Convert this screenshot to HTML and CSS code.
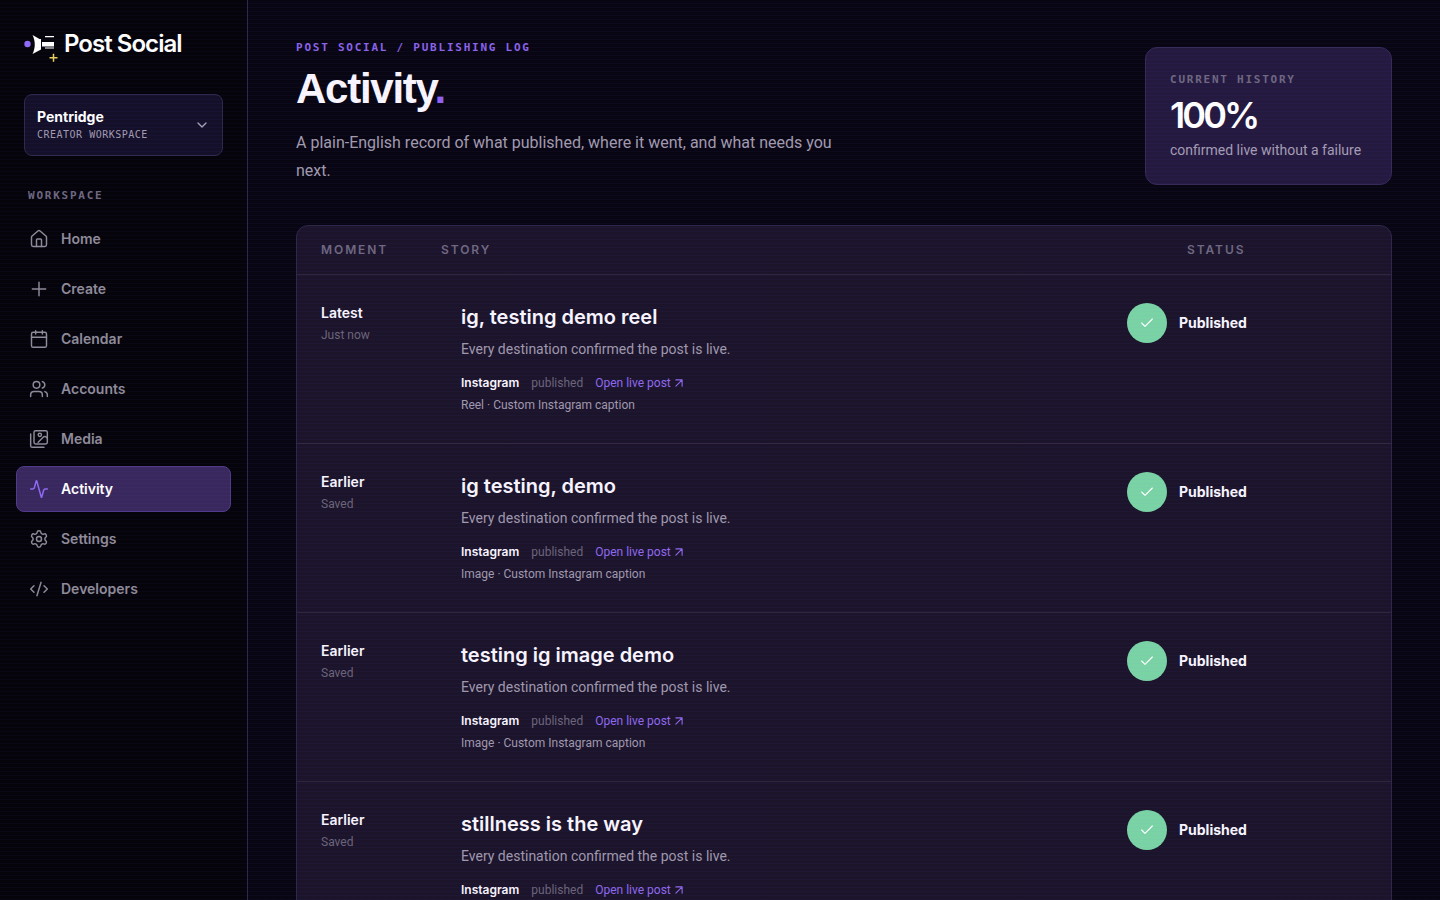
FILE: index.html
```
<!DOCTYPE html>
<html lang="en">
<head>
<meta charset="utf-8">
<title>Activity</title>
<link rel="stylesheet" href="styles.css">
</head>
<body>
<svg class="sprite" aria-hidden="true">
  <symbol id="check" viewBox="0 0 24 24"><path d="M20 6 9 17l-5-5"/></symbol>
  <symbol id="arrow" viewBox="4 4 16 16"><path d="M7 7h10v10M7 17 17 7"/></symbol>
</svg>
<div class="shell">
  <aside class="sidebar">
    <a class="brand" href="#">
      <svg class="brand-mark" viewBox="0 0 36 36" aria-hidden="true">
        <circle cx="3.5" cy="18" r="3.2" fill="#8f6af5"/>
        <path d="M8.500 9 15.500 13h1.500v10.500l-8.500 4.500c3-6 3-13 0-19Z" fill="#fff"/>
        <path d="M18 16H30v4.500H18ZM21 10h9v1.200h-9ZM21 21.500h9v1h-9Z" fill="#fff"/>
        <path d="M29.500 27.700v8M25.500 31.700h8" stroke="#e6cf62" stroke-width="1.500"/>
      </svg>
      <span>Post Social</span>
    </a>
    <button class="workspace" type="button">
      <span class="workspace-text">
        <strong>Pentridge</strong>
        <small>CREATOR WORKSPACE</small>
      </span>
      <svg class="icon chevron" viewBox="0 0 24 24" aria-hidden="true"><path d="m6 9 6 6 6-6"/></svg>
    </button>
    <p class="label nav-label">WORKSPACE</p>
    <nav class="nav">
      <a href="#"><svg class="icon" viewBox="0 0 24 24" aria-hidden="true"><path d="M15 21v-8a1 1 0 0 0-1-1h-4a1 1 0 0 0-1 1v8"/><path d="M3 10a2 2 0 0 1 .709-1.528l7-6a2 2 0 0 1 2.582 0l7 6A2 2 0 0 1 21 10v9a2 2 0 0 1-2 2H5a2 2 0 0 1-2-2z"/></svg>Home</a>
      <a href="#"><svg class="icon" viewBox="0 0 24 24" aria-hidden="true"><path d="M4 12h16M12 4v16"/></svg>Create</a>
      <a href="#"><svg class="icon" viewBox="0 0 24 24" aria-hidden="true"><path d="M8 2v4M16 2v4M3 10h18"/><rect width="18" height="18" x="3" y="4" rx="2"/></svg>Calendar</a>
      <a href="#"><svg class="icon" viewBox="0 0 24 24" aria-hidden="true"><path d="M16 21v-2a4 4 0 0 0-4-4H6a4 4 0 0 0-4 4v2M16 3.128a4 4 0 0 1 0 7.744M22 21v-2a4 4 0 0 0-3-3.870"/><circle cx="9" cy="7" r="4"/></svg>Accounts</a>
      <a href="#"><svg class="icon" viewBox="0 0 24 24" aria-hidden="true"><path d="m22 11-1.296-1.296a2.400 2.400 0 0 0-3.408 0L11 16"/><path d="M18 22H4a2 2 0 0 1-2-2V6"/><circle cx="13" cy="7" r="2"/><rect width="16" height="16" x="6" y="2" rx="2"/></svg>Media</a>
      <a href="#" class="active" aria-current="page"><svg class="icon" viewBox="0 0 24 24" aria-hidden="true"><path d="M22 12h-2.480a2 2 0 0 0-1.930 1.460l-2.350 8.360a.25.25 0 0 1-.48 0L9.240 2.180a.25.25 0 0 0-.48 0l-2.350 8.360A2 2 0 0 1 4.490 12H2"/></svg>Activity</a>
      <a href="#"><svg class="icon" viewBox="0 0 24 24" aria-hidden="true"><path d="M9.671 4.136a2.340 2.340 0 0 1 4.659 0 2.340 2.340 0 0 0 3.319 1.915 2.340 2.340 0 0 1 2.330 4.033 2.340 2.340 0 0 0 0 3.831 2.340 2.340 0 0 1-2.330 4.033 2.340 2.340 0 0 0-3.319 1.915 2.340 2.340 0 0 1-4.659 0 2.340 2.340 0 0 0-3.320-1.915 2.340 2.340 0 0 1-2.330-4.033 2.340 2.340 0 0 0 0-3.831A2.340 2.340 0 0 1 6.350 6.051a2.340 2.340 0 0 0 3.319-1.915"/><circle cx="12" cy="12" r="3"/></svg>Settings</a>
      <a href="#"><svg class="icon" viewBox="0 0 24 24" aria-hidden="true"><path d="m18 16 4-4-4-4M6 8l-4 4 4 4M14.500 4l-5 16"/></svg>Developers</a>
    </nav>
  </aside>
  <main class="main">
    <header class="page-head">
      <div class="intro">
        <p class="label eyebrow">POST SOCIAL / PUBLISHING LOG</p>
        <h1>Activity<span class="dot">.</span></h1>
        <p class="lead">A plain-English record of what published, where it went, and what needs you next.</p>
      </div>
      <section class="score">
        <p class="label">CURRENT HISTORY</p>
        <strong>100%</strong>
        <p class="score-note">confirmed live without a failure</p>
      </section>
    </header>
    <table class="log">
      <thead>
        <tr><th scope="col">MOMENT</th><th scope="col">STORY</th><th scope="col">STATUS</th></tr>
      </thead>
      <tbody>
        <tr>
          <td class="moment"><strong>Latest</strong><span>Just now</span></td>
          <td class="story"><h2>ig, testing demo reel</h2><p class="summary">Every destination confirmed the post is live.</p>
            <div class="target"><strong>Instagram</strong><span>published</span><a href="#">Open live post <svg class="icon arrow" aria-hidden="true"><use href="#arrow"/></svg></a></div>
            <p class="caption">Reel · Custom Instagram caption</p></td>
          <td class="status"><span class="badge"><svg class="icon" aria-hidden="true"><use href="#check"/></svg></span><strong>Published</strong></td>
        </tr>
        <tr>
          <td class="moment"><strong>Earlier</strong><span>Saved</span></td>
          <td class="story"><h2>ig testing, demo</h2><p class="summary">Every destination confirmed the post is live.</p>
            <div class="target"><strong>Instagram</strong><span>published</span><a href="#">Open live post <svg class="icon arrow" aria-hidden="true"><use href="#arrow"/></svg></a></div>
            <p class="caption">Image · Custom Instagram caption</p></td>
          <td class="status"><span class="badge"><svg class="icon" aria-hidden="true"><use href="#check"/></svg></span><strong>Published</strong></td>
        </tr>
        <tr>
          <td class="moment"><strong>Earlier</strong><span>Saved</span></td>
          <td class="story"><h2>testing ig image demo</h2><p class="summary">Every destination confirmed the post is live.</p>
            <div class="target"><strong>Instagram</strong><span>published</span><a href="#">Open live post <svg class="icon arrow" aria-hidden="true"><use href="#arrow"/></svg></a></div>
            <p class="caption">Image · Custom Instagram caption</p></td>
          <td class="status"><span class="badge"><svg class="icon" aria-hidden="true"><use href="#check"/></svg></span><strong>Published</strong></td>
        </tr>
        <tr>
          <td class="moment"><strong>Earlier</strong><span>Saved</span></td>
          <td class="story"><h2>stillness is the way</h2><p class="summary">Every destination confirmed the post is live.</p>
            <div class="target"><strong>Instagram</strong><span>published</span><a href="#">Open live post <svg class="icon arrow" aria-hidden="true"><use href="#arrow"/></svg></a></div></td>
          <td class="status"><span class="badge"><svg class="icon" aria-hidden="true"><use href="#check"/></svg></span><strong>Published</strong></td>
        </tr>
      </tbody>
    </table>
  </main>
</div>
</body>
</html>
```
FILE: styles.css
```
* { box-sizing: border-box; }
body, h1, h2, p { margin: 0; }
body {
  background: #090614;
  color: #f8f5ff;
  font: 14px/20px Roboto, "Liberation Sans", sans-serif;
}
a { color: inherit; text-decoration: none; }
strong, h2, th { font-family: Inter, "Liberation Sans", sans-serif; }
.sprite { display: none; }
.icon {
  width: 20px; height: 20px; flex: none;
  fill: none; stroke: currentColor; stroke-width: 1.75;
  stroke-linecap: round; stroke-linejoin: round;
}
.label {
  font: 700 11px/16px "DejaVu Sans Mono", "Liberation Mono", monospace;
  letter-spacing: 0.16em;
  color: #6f6880;
}

.shell { display: flex; height: 100vh; overflow: hidden; }
/* faint scanlines over the whole window */
.shell::after {
  content: ""; position: fixed; inset: 0; pointer-events: none;
  background: repeating-linear-gradient(to bottom, transparent 0 3px, rgba(140, 110, 255, 0.04) 3px 4px);
}

.sidebar {
  width: 248px; flex: none;
  padding: 26px 16px;
  background: #05040b;
  border-right: 1px solid #30264f;
  font-family: Inter, "Liberation Sans", sans-serif;
}
.brand {
  display: flex; align-items: center; gap: 4px;
  padding: 0 8px;
  font-size: 24px; line-height: 36px; font-weight: 600;
  letter-spacing: -0.04em; color: #fff;
}
.brand-mark { width: 36px; height: 36px; flex: none; }
.workspace {
  display: flex; align-items: center; justify-content: space-between;
  width: calc(100% - 16px); margin: 32px 8px 0; padding: 12px;
  background: #14102a; border: 1px solid #30284c; border-radius: 8px;
  color: #fff; text-align: left; font: inherit;
}
.workspace-text { display: flex; flex-direction: column; }
.workspace strong { font-size: 14px; line-height: 20px; font-weight: 700; }
.workspace small {
  font: 10px/16px "DejaVu Sans Mono", "Liberation Mono", monospace;
  letter-spacing: 0.05em; color: #a29bb0;
}
.chevron { width: 16px; height: 16px; color: #a8a2b6; stroke-width: 2; }
.nav-label { margin: 32px 12px 12px; }
.nav { display: flex; flex-direction: column; gap: 4px; }
.nav a {
  display: flex; align-items: center; gap: 12px;
  height: 46px; padding: 0 12px;
  border: 1px solid transparent; border-radius: 8px;
  font-weight: 600; color: #8f8b99;
}
.nav .active { background: #39285d; border-color: #513a8a; color: #fff; }
.nav .active .icon { color: #9069f5; }

.main { flex: 1; min-width: 0; padding: 47px 48px 0; }
.page-head { display: flex; justify-content: space-between; align-items: flex-start; gap: 48px; }
.intro { max-width: 560px; }
.eyebrow { margin-top: -7px; color: #8a63e8; }
h1 {
  margin-top: 11px;
  font: 700 42px/44px "Liberation Sans", Arial, sans-serif;
  letter-spacing: -0.03em;
}
.dot { color: #8f63f0; }
.lead { margin-top: 18px; font-size: 16px; line-height: 28px; color: #a19bae; }
.score {
  min-width: 247px; padding: 24px; border: 1px solid #352a58; border-radius: 12px;
  background: #241a40;
}
.score strong { display: block; margin-top: 7px; font-size: 36px; line-height: 40px; font-weight: 600; letter-spacing: -0.08em; color: #fff; }
.score-note { margin-top: 5px; color: #a59db4; }

.log {
  display: block; margin-top: 40px;
  background: #1b142b; border: 1px solid #30264a; border-radius: 12px;
}
.log thead, .log tbody { display: block; }
.log tr { display: grid; grid-template-columns: 120px minmax(0, 1fr) 240px; gap: 20px; padding: 28px 24px; min-height: 169px; }
.log tbody tr { border-top: 1px solid #30273f; }
.log thead tr { grid-template-columns: 100px minmax(0, 1fr) 180px; padding: 16px 24px; min-height: 0; }
.log th, .log td { padding: 0; text-align: left; }
.log th { font-size: 12px; line-height: 16px; font-weight: 600; letter-spacing: 0.16em; color: #6f6880; }
.moment strong, .moment span { display: block; }
.moment strong { font-weight: 600; }
.moment span { margin-top: 2px; font-size: 12px; color: #6c6579; }
h2 { font-size: 20px; line-height: 28px; font-weight: 600; }
.summary { margin-top: 8px; color: #a099ad; }
.target { display: flex; gap: 12px; margin-top: 14px; font-size: 12px; }
.target strong { font-weight: 600; }
.target span { color: #6c6579; }
.target a { display: flex; align-items: center; gap: 3px; color: #9069ee; }
.arrow { width: 10px; height: 10px; stroke-width: 1.75; }
.caption { margin-top: 2px; font-size: 12px; color: #a099ad; }
.status { display: flex; align-items: center; gap: 12px; align-self: start; }
.status strong { font-weight: 700; }
.badge { display: flex; align-items: center; justify-content: center; width: 40px; height: 40px; border-radius: 50%; background: #7ad3a5; }
.badge .icon { width: 16px; height: 16px; color: #fff; }
```
